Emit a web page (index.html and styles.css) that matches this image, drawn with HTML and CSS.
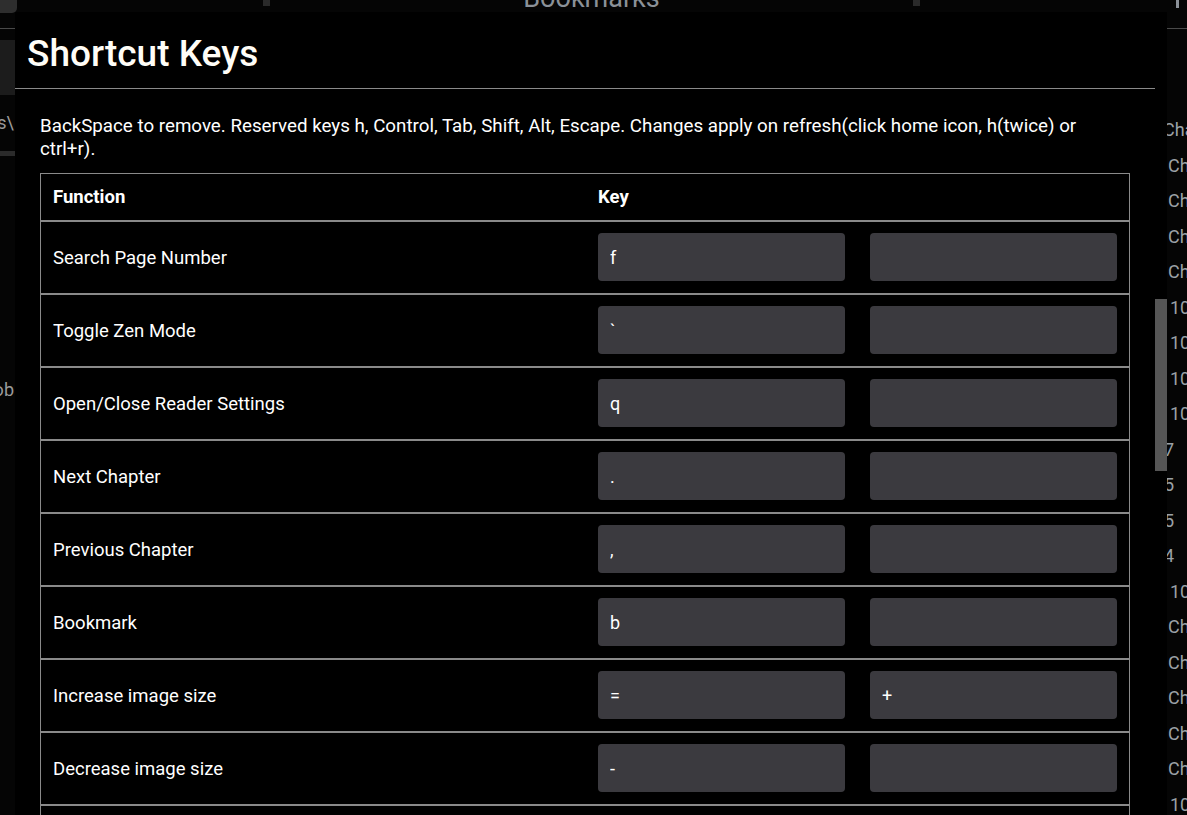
FILE: index.html
```html
<!DOCTYPE html>
<html lang="en">
<head>
<meta charset="utf-8">
<title>Shortcut Keys</title>
<link rel="stylesheet" href="styles.css">
</head>
<body>
<div class="page">
  <header class="topbar">
    <div class="tb-left"><span class="tb-btn"></span></div>
    <div class="tb-tabs">
      <span class="tab-sep"></span>
      <span class="tab-title">Bookmarks</span>
      <span class="tab-sep"></span>
    </div>
    <div class="tb-right"><span class="tb-mark"></span></div>
  </header>
  <div class="page-body">
    <aside class="side-left">
      <div class="sl-block"></div>
      <div class="sl-text sl-path">Files\</div>
      <div class="sl-bar"></div>
      <div class="sl-text sl-ob">Job</div>
    </aside>
    <main class="page-main"></main>
    <aside class="side-right">
      <ul class="ch-list">
        <li class="i-a">Chapter</li>
        <li class="i-b">Chapter</li>
        <li class="i-b">Chapter</li>
        <li class="i-b">Chapter</li>
        <li class="i-b">Chapter</li>
        <li class="i-c">108</li>
        <li class="i-c">107</li>
        <li class="i-c">106</li>
        <li class="i-c">105</li>
        <li class="i-d">17</li>
        <li class="i-d">15</li>
        <li class="i-d">15</li>
        <li class="i-d">14</li>
        <li class="i-c">100</li>
        <li class="i-b">Chapter</li>
        <li class="i-b">Chapter</li>
        <li class="i-b">Chapter</li>
        <li class="i-b">Chapter</li>
        <li class="i-b">Chapter</li>
        <li class="i-c">100</li>
      </ul>
    </aside>
  </div>
</div>

<div class="modal">
  <div class="modal-content">
    <h1 class="modal-title">Shortcut Keys</h1>
    <hr class="modal-rule">
    <div class="modal-body">
      <p class="hint">BackSpace to remove. Reserved keys h, Control, Tab, Shift, Alt, Escape. Changes apply on refresh(click home icon, h(twice) or ctrl+r).</p>
      <table class="keys">
        <colgroup>
          <col class="c-func">
          <col class="c-key">
          <col class="c-key">
        </colgroup>
        <thead>
          <tr><th>Function</th><th colspan="2" class="th-key">Key</th></tr>
        </thead>
        <tbody>
          <tr><td class="fn">Search Page Number</td><td class="k"><input class="key-input" type="text" value="f"></td><td class="k"><input class="key-input" type="text" value=""></td></tr>
          <tr><td class="fn">Toggle Zen Mode</td><td class="k"><input class="key-input" type="text" value="`"></td><td class="k"><input class="key-input" type="text" value=""></td></tr>
          <tr><td class="fn">Open/Close Reader Settings</td><td class="k"><input class="key-input" type="text" value="q"></td><td class="k"><input class="key-input" type="text" value=""></td></tr>
          <tr><td class="fn">Next Chapter</td><td class="k"><input class="key-input" type="text" value="."></td><td class="k"><input class="key-input" type="text" value=""></td></tr>
          <tr><td class="fn">Previous Chapter</td><td class="k"><input class="key-input" type="text" value=","></td><td class="k"><input class="key-input" type="text" value=""></td></tr>
          <tr><td class="fn">Bookmark</td><td class="k"><input class="key-input" type="text" value="b"></td><td class="k"><input class="key-input" type="text" value=""></td></tr>
          <tr><td class="fn">Increase image size</td><td class="k"><input class="key-input" type="text" value="="></td><td class="k"><input class="key-input" type="text" value="+"></td></tr>
          <tr><td class="fn">Decrease image size</td><td class="k"><input class="key-input" type="text" value="-"></td><td class="k"><input class="key-input" type="text" value=""></td></tr>
          <tr><td class="fn">Reset image size</td><td class="k"><input class="key-input" type="text" value="0"></td><td class="k"><input class="key-input" type="text" value=""></td></tr>
        </tbody>
      </table>
    </div>
  </div>
  <div class="scroll-thumb"></div>
</div>
</body>
</html>
```

FILE: styles.css
```css
html, body {
  margin: 0;
  padding: 0;
}
body {
  width: 1187px;
  height: 815px;
  overflow: hidden;
  background: #050505;
  font-family: Roboto, "Liberation Sans", sans-serif;
  color: #fff;
}

/* ---------- background page ---------- */
.page {
  display: flex;
  flex-direction: column;
  height: 815px;
}
.topbar {
  display: flex;
  height: 28px;
  border-bottom: 1px solid #4a4a4a;
  overflow: hidden;
}
.tb-left {
  width: 15px;
  flex: none;
}
.tb-btn {
  display: block;
  width: 17px;
  height: 13px;
  background: #2e2e2e;
  border-radius: 0 0 5px 0;
}
.tb-tabs {
  display: flex;
  justify-content: space-between;
  align-items: flex-start;
  margin-left: 248px;
  width: 657px;
}
.tab-sep {
  display: block;
  width: 7px;
  height: 6px;
  background: #2a2a2a;
}
.tab-title {
  display: block;
  font-size: 27px;
  line-height: 27px;
  margin-top: -15px;
  color: #8b9198;
}
.tb-right {
  margin-left: auto;
  width: 20px;
  flex: none;
}
.tb-mark {
  display: block;
  width: 3px;
  height: 8px;
  margin-left: 9px;
  background: #8b9198;
}

.page-body {
  flex: 1;
  display: flex;
  min-height: 0;
}
.side-left {
  width: 15px;
  flex: none;
  display: flex;
  flex-direction: column;
  overflow: hidden;
}
.sl-block {
  margin-top: 11px;
  height: 55px;
  background: #1c1c1c;
}
.sl-text {
  font-size: 18px;
  line-height: 20px;
  color: #9a9a9a;
  white-space: nowrap;
  display: flex;
  justify-content: flex-end;
}
.sl-path {
  margin-top: 18px;
  margin-right: 1px;
}
.sl-bar {
  margin-top: 18px;
  height: 5px;
  background: #2b2b2b;
}
.sl-ob {
  margin-top: 224px;
  margin-right: 1px;
}
.page-main {
  flex: 1;
}
.side-right {
  width: 40px;
  flex: none;
  overflow: hidden;
}
.ch-list {
  list-style: none;
  margin: 83px 0 0;
  padding: 0;
}
.ch-list li {
  font-size: 18px;
  line-height: 35.5px;
  height: 35.5px;
  color: #9ba1a7;
  white-space: nowrap;
}
.ch-list .i-a { padding-left: 16px; }
.ch-list .i-b { padding-left: 21px; }
.ch-list .i-c { padding-left: 23px; }
.ch-list .i-d { padding-left: 7px; }

/* ---------- modal ---------- */
.modal {
  position: fixed;
  left: 15px;
  top: 12px;
  width: 1152px;
  bottom: 0;
  background: #000;
  overflow: hidden;
}
.modal-content {
  margin-right: 12px;
}
.scroll-thumb {
  position: absolute;
  right: 0;
  top: 287px;
  width: 12px;
  height: 172px;
  background: #565656;
}
.modal-title {
  margin: 0;
  padding: 20px 12px 0;
  font-size: 37px;
  font-weight: 500;
  line-height: 1.2;
  color: #fffdf7;
}
.modal-rule {
  margin: 12px 0 0;
  border: 0;
  border-top: 1px solid #8a8a8a;
  height: 0;
}
.modal-body {
  padding: 0 25px;
}
.hint {
  margin: 26px 0 12px;
  padding-right: 30px;
  font-size: 18.75px;
  line-height: 23px;
  color: #fff;
}

.keys {
  width: 100%;
  table-layout: fixed;
  border-collapse: separate;
  border-spacing: 0;
  border: 1px solid #8a8a8a;
}
.c-func { width: 50%; }
.c-key { width: 25%; }
.keys th {
  height: 46px;
  padding: 0 12px;
  text-align: left;
  font-size: 18.5px;
  font-weight: 700;
  vertical-align: middle;
}
.keys .th-key {
  padding-left: 13px;
}
.keys td {
  border-top: 2px solid #8a8a8a;
  vertical-align: middle;
}
.keys td.fn {
  padding: 0 12px;
  font-size: 18.5px;
}
.keys td.k {
  padding: 11px 12px 12px 13px;
}
.key-input {
  display: block;
  box-sizing: border-box;
  width: 100%;
  height: 48px;
  margin: 0;
  padding: 0 12px;
  border: 0;
  border-radius: 4px;
  background: #3b3a3f;
  color: #fff;
  font-family: Roboto, "Liberation Sans", sans-serif;
  font-size: 18px;
  outline: none;
}
```
